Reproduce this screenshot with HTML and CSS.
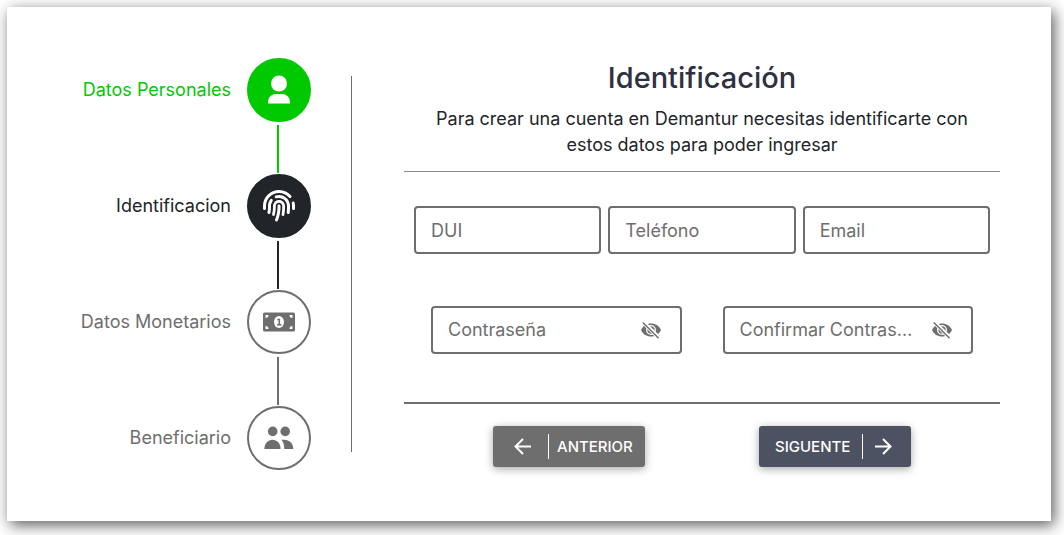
FILE: index.html
```html
<!DOCTYPE html>
<html lang="es">
<head>
  <meta charset="utf-8">
  <meta name="viewport" content="width=device-width, initial-scale=1">
  <title>Identificación</title>
  <link rel="stylesheet" href="styles.css">
</head>
<body>
  <svg class="sprite" aria-hidden="true">
    <symbol id="eye-off" viewBox="0 0 22 20">
      <path fill="currentColor" d="M1 10C3 5.600 6.600 3.500 11 3.500S19 5.600 21 10C19 14.400 15.400 16.500 11 16.500S3 14.400 1 10z"/>
      <circle cx="11" cy="10" r="4.300" fill="currentColor" stroke="#fff" stroke-width="1.300"/>
      <path fill="none" stroke="#fff" stroke-width="4" d="M2.500 1.500L19.500 18.500"/>
      <path fill="none" stroke="currentColor" stroke-width="1.500" d="M2.800 2.500L18.600 18.300"/>
    </symbol>
  </svg>

  <main class="card">
    <ol class="steps">
      <li class="step step-done">
        <span class="step-label">Datos Personales</span>
        <span class="step-circle">
          <svg viewBox="0 0 32 32" fill="currentColor" aria-hidden="true">
            <circle cx="16" cy="9.500" r="8"/>
            <path d="M5 29.500V28a8 8 0 0 1 8-8h6a8 8 0 0 1 8 8v1.500z"/>
          </svg>
        </span>
      </li>
      <li class="step step-current" aria-current="step">
        <span class="step-label">Identificacion</span>
        <span class="step-circle">
          <svg viewBox="0 0 512 512" fill="currentColor" aria-hidden="true">
            <path d="M48 256C48 141.100 141.100 48 256 48c63.100 0 119.600 28.100 157.800 72.500c8.600 10.100 23.800 11.200 33.800 2.600s11.200-23.800 2.600-33.800C403.300 34.600 333.700 0 256 0C114.600 0 0 114.600 0 256v40c0 13.300 10.700 24 24 24s24-10.700 24-24V256zm458.500-52.900c-2.700-13-15.500-21.300-28.400-18.500s-21.300 15.500-18.500 28.400c2.900 13.900 4.500 28.300 4.500 43.100v40c0 13.300 10.700 24 24 24s24-10.700 24-24V256c0-18.100-1.900-35.800-5.500-52.900zM256 80c-19 0-37.400 3-54.500 8.600c-15.200 5-18.700 23.700-8.300 35.900c7.100 8.300 18.800 10.800 29.400 7.900c10.600-2.900 21.800-4.400 33.400-4.400c70.700 0 128 57.300 128 128v24.900c0 25.200-1.500 50.300-4.400 75.300c-1.700 14.600 9.400 27.800 24.200 27.800c11.800 0 21.900-8.600 23.300-20.300c3.300-27.400 5-55 5-82.700V256c0-97.200-78.800-176-176-176zM150.700 148.700c-9.100-10.600-25.300-11.400-33.900-.4C93.700 178 80 215.400 80 256v24.900c0 24.200-2.600 48.400-7.800 71.900C68.800 368.400 80.100 384 96.100 384c10.500 0 19.900-7 22.200-17.300c6.400-28.100 9.700-56.800 9.700-85.800V256c0-27.200 8.500-52.400 22.900-73.100c7.200-10.400 8-24.600-.2-34.200zM256 160c-53 0-96 43-96 96v24.900c0 35.900-4.600 71.500-13.800 106.100c-3.800 14.300 6.700 29 21.500 29c9.500 0 17.900-6.200 20.400-15.400c10.500-39 15.900-79.200 15.900-119.700V256c0-28.700 23.300-52 52-52s52 23.300 52 52v24.900c0 36.300-3.500 72.400-10.400 107.900c-2.700 13.900 7.700 27.200 21.800 27.200c10.200 0 19-7 21-17c7.700-38.800 11.600-78.300 11.600-118.100V256c0-53-43-96-96-96zm24 96c0-13.300-10.700-24-24-24s-24 10.700-24 24v24.900c0 59.900-11 119.300-32.500 175.200l-5.900 15.300c-4.800 12.400 1.400 26.300 13.800 31s26.300-1.400 31-13.800l5.900-15.300C267.900 411.900 280 346.700 280 280.900V256z"/>
          </svg>
        </span>
      </li>
      <li class="step">
        <span class="step-label">Datos Monetarios</span>
        <span class="step-circle">
          <svg viewBox="0 0 32 32" aria-hidden="true">
            <rect y="6.500" width="32" height="19" rx="1.500" fill="currentColor"/>
            <path fill="#fff" d="M2.500 9h3a3 3 0 0 1-3 3zM29.500 9v3a3 3 0 0 1-3-3zM2.500 23v-3a3 3 0 0 1 3 3zM29.500 23h-3a3 3 0 0 1 3-3z"/>
            <ellipse cx="16" cy="16" rx="5" ry="6" fill="#fff"/>
            <path fill="none" stroke="currentColor" stroke-width="1.600" d="M14.300 13.500h2v5M14 18.700h4.500"/>
          </svg>
        </span>
      </li>
      <li class="step">
        <span class="step-label">Beneficiario</span>
        <span class="step-circle">
          <svg viewBox="0 0 32 32" fill="currentColor" aria-hidden="true">
            <circle cx="9.700" cy="9.400" r="4.800"/>
            <circle cx="22.200" cy="9.400" r="4.800"/>
            <path d="M1.400 27C1.400 21.500 5 17.800 9.500 17.800S17.600 21.500 17.600 27z"/>
            <path d="M18.400 17.800h2.600c5.500 0 9.300 3.700 9.300 9.200h-9c0-4-.9-7-2.900-9.200z"/>
          </svg>
        </span>
      </li>
    </ol>

    <form class="form">
      <header class="form-header">
        <h1 class="title">Identificación</h1>
        <p class="lead">Para crear una cuenta en Demantur necesitas identificarte con estos datos para poder ingresar</p>
      </header>

      <div class="fields">
        <div class="row">
          <input class="box" type="text" placeholder="DUI" aria-label="DUI">
          <input class="box" type="tel" placeholder="Teléfono" aria-label="Teléfono">
          <input class="box" type="email" placeholder="Email" aria-label="Email">
        </div>
        <div class="row row-passwords">
          <div class="box password">
            <input class="password-input" type="password" placeholder="Contraseña" aria-label="Contraseña">
            <button class="reveal" type="button" aria-label="Mostrar contraseña"><svg class="eye" aria-hidden="true"><use href="#eye-off"/></svg></button>
          </div>
          <div class="box password">
            <input class="password-input" type="password" placeholder="Confirmar Contraseña" aria-label="Confirmar Contraseña">
            <button class="reveal" type="button" aria-label="Mostrar confirmación"><svg class="eye" aria-hidden="true"><use href="#eye-off"/></svg></button>
          </div>
        </div>
      </div>

      <footer class="actions">
        <button class="button button-back" type="button">
          <span class="arrow"><svg viewBox="0 0 24 24" aria-hidden="true"><path d="M20 12H4.500M12 4.500L4.500 12l7.500 7.500"/></svg></span>
          <span class="button-text">ANTERIOR</span>
        </button>
        <button class="button button-next" type="submit">
          <span class="button-text">SIGUENTE</span>
          <span class="arrow"><svg viewBox="0 0 24 24" aria-hidden="true"><path d="M4 12h15.500M12 4.500l7.500 7.500-7.500 7.500"/></svg></span>
        </button>
      </footer>
    </form>
  </main>
</body>
</html>
```
FILE: styles.css
```css
:root {
  --gray: #6e6e6e;
  --dark: #212529;
  --green: #00c900;
  --slate: #4d5263;
}

* {
  box-sizing: border-box;
}

body {
  margin: 0;
  padding: 7px 13px 14px 7px;
  background: #fff;
  color: var(--dark);
  font: 18px/26px Inter, "Open Sans", sans-serif;
}

.sprite {
  display: none;
}

.card {
  display: grid;
  grid-template-columns: 344fr 700fr;
  padding: 51px 0;
  background: #fff;
  box-shadow: 3px 4px 14px rgba(0, 0, 0, 0.65);
}

.steps {
  display: flex;
  flex-direction: column;
  gap: 52px;
  margin: 0;
  padding: 0 40px 0 0;
  list-style: none;
}

.step {
  display: flex;
  align-items: center;
  justify-content: flex-end;
  gap: 16px;
  color: var(--gray);
}

.step-done {
  color: var(--green);
}

.step-current {
  color: var(--dark);
}

.step-circle {
  position: relative;
  display: grid;
  place-items: center;
  width: 64px;
  height: 64px;
  border: 2px solid currentColor;
  border-radius: 50%;
}

.step-circle svg {
  width: 32px;
  height: 32px;
}

.step-done .step-circle {
  background: var(--green);
}

.step-current .step-circle {
  background: var(--dark);
}

.step-done svg,
.step-current svg {
  color: #fff;
}

/* Connector down to the next step */
.step:not(:last-child) .step-circle::after {
  content: "";
  position: absolute;
  top: 65px;
  left: 28px;
  width: 2px;
  height: 48px;
  background: currentColor;
}

.form {
  position: relative;
  padding: 0 51px 0 53px;
}

.form::before {
  content: "";
  position: absolute;
  top: 18px;
  bottom: 18px;
  left: 0;
  width: 1px;
  background: var(--gray);
}

.form-header {
  padding-bottom: 13px;
  border-bottom: 1px solid #8a8a8a;
  text-align: center;
}

.title {
  margin: 0 0 8px;
  color: #2f3140;
  font-size: 29px;
  font-weight: 500;
  line-height: 40px;
}

.lead {
  margin: 0 auto;
  max-width: 560px;
}

.fields {
  display: grid;
  gap: 52px;
  padding: 34px 10px 48px;
  border-bottom: 2px solid var(--gray);
}

.row {
  display: grid;
  grid-template-columns: repeat(3, 1fr);
  gap: 7px;
}

.row-passwords {
  grid-template-columns: repeat(2, 1fr);
  gap: 41px;
  padding: 0 17px;
}

.box {
  width: 100%;
  min-width: 0;
  height: 48px;
  padding: 0 15px;
  border: 2px solid var(--gray);
  border-radius: 4px;
  background: #fff;
  color: var(--dark);
  font: inherit;
}

.password {
  display: flex;
  align-items: center;
  gap: 14px;
  padding-right: 18px;
}

.password-input {
  flex: 1;
  min-width: 0;
  padding: 0;
  border: 0;
  outline: 0;
  background: none;
  color: inherit;
  font: inherit;
}

::placeholder {
  color: var(--gray);
  opacity: 1;
}

.password-input:placeholder-shown {
  text-overflow: ellipsis;
}

.reveal {
  display: flex;
  padding: 0;
  border: 0;
  background: none;
  color: var(--gray);
}

.eye {
  width: 22px;
  height: 20px;
}

.actions {
  display: flex;
  justify-content: center;
  gap: 114px;
  padding-top: 22px;
}

.button {
  display: flex;
  align-items: center;
  width: 152px;
  height: 41px;
  border: 0;
  border-radius: 3px;
  box-shadow: 0 2px 8px rgba(0, 0, 0, 0.35);
  color: #fff;
  font: 500 15px/24px Inter, "Open Sans", sans-serif;
}

.button-back {
  padding: 0 15px 0 18px;
  background: var(--gray);
}

.button-next {
  justify-content: space-between;
  padding: 0 16px;
  background: var(--slate);
}

.button-back .arrow {
  margin-right: 8px;
  padding-right: 13px;
  border-right: 1px solid #fff;
}

.button-next .arrow {
  padding-left: 8px;
  border-left: 1px solid #fff;
}

.arrow svg {
  display: block;
  width: 24px;
  height: 25px;
  fill: none;
  stroke: currentColor;
  stroke-width: 2;
}
```
